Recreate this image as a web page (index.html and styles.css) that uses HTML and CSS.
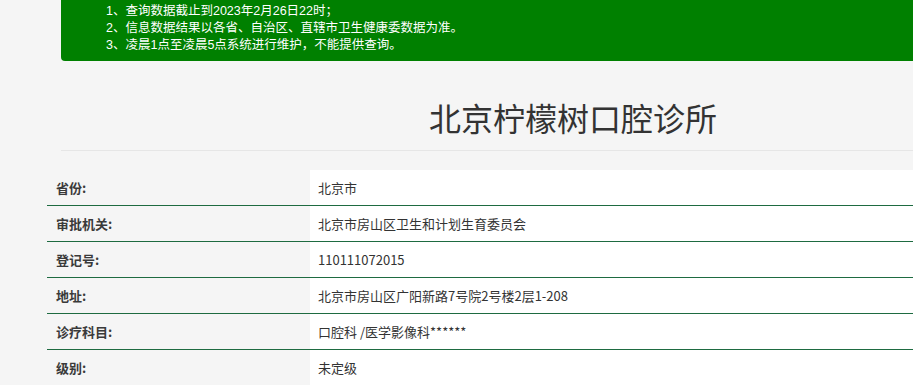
FILE: index.html
```html
<!DOCTYPE html>
<html lang="zh-CN">
<head>
<meta charset="utf-8">
<title>北京柠檬树口腔诊所</title>
<link rel="stylesheet" href="styles.css">
</head>
<body>
<div class="notice">
  <p>1、查询数据截止到2023年2月26日22时；</p>
  <p>2、信息数据结果以各省、自治区、直辖市卫生健康委数据为准。</p>
  <p>3、凌晨1点至凌晨5点系统进行维护，不能提供查询。</p>
</div>
<div class="title-wrap">
  <h1 class="title">北京柠檬树口腔诊所</h1>
</div>
<div class="info">
  <div class="row"><div class="label">省份:</div><div class="value">北京市</div></div>
  <div class="row"><div class="label">审批机关:</div><div class="value">北京市房山区卫生和计划生育委员会</div></div>
  <div class="row"><div class="label">登记号:</div><div class="value">110111072015</div></div>
  <div class="row"><div class="label">地址:</div><div class="value">北京市房山区广阳新路7号院2号楼2层1-208</div></div>
  <div class="row"><div class="label">诊疗科目:</div><div class="value">口腔科 /医学影像科******</div></div>
  <div class="row last"><div class="label">级别:</div><div class="value">未定级</div></div>
</div>
</body>
</html>
```
FILE: styles.css
```css
html, body {
  margin: 0;
  padding: 0;
  overflow: hidden;
}
body {
  background: #f5f5f5;
  font-family: "Noto Sans CJK SC", "Noto Sans", sans-serif;
  color: #333;
  width: 913px;
}
.notice {
  margin-left: 61px;
  width: 1024px;
  background: #008000;
  color: #fff;
  font-family: "Liberation Sans", "Noto Sans CJK SC", sans-serif;
  font-size: 12.5px;
  line-height: 17px;
  padding: 3px 0 7px 45px;
  border-bottom-left-radius: 4px;
  box-sizing: border-box;
}
.notice p {
  margin: 0;
  height: 17px;
}
.title-wrap {
  margin-left: 61px;
  width: 1024px;
  border-bottom: 1px solid #e6e6e6;
  padding: 34px 0 11px;
}
.title {
  margin: 0;
  font-size: 32px;
  font-weight: normal;
  line-height: 44px;
  text-align: center;
  color: #333;
}
.info {
  margin-top: 19px;
  margin-left: 47px;
  width: 1000px;
}
.row {
  display: flex;
  height: 35px;
  border-bottom: 1px solid #1e6b41;
  font-size: 13px;
}
.row.last {
  border-bottom: none;
}
.label {
  width: 263px;
  padding-left: 9px;
  box-sizing: border-box;
  font-weight: bold;
  color: #3a3a3a;
  display: flex;
  align-items: center;
}
.value {
  flex: 1;
  background: #fff;
  padding-left: 8px;
  display: flex;
  align-items: center;
}
```
